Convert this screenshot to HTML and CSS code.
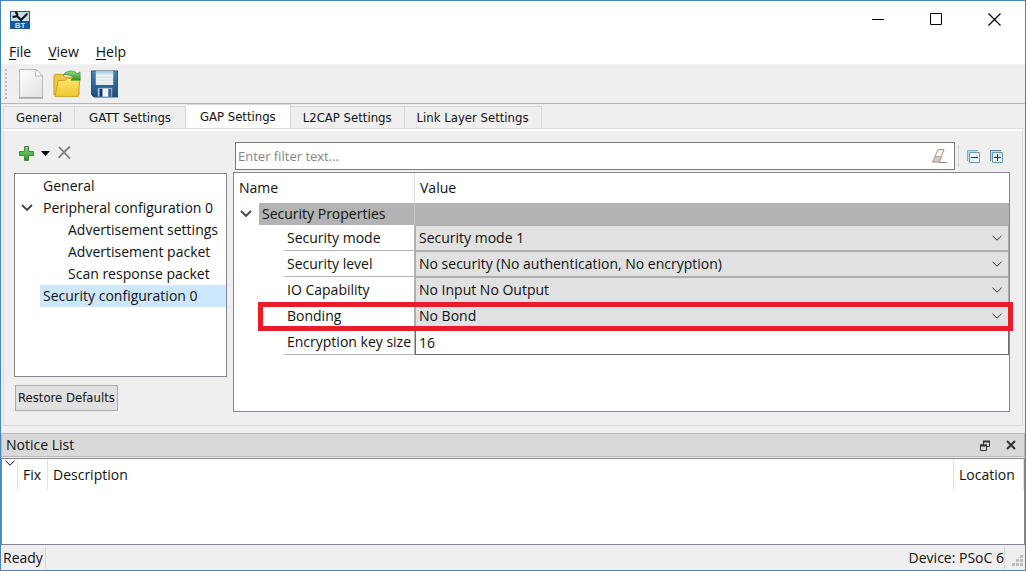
FILE: index.html
```html
<!DOCTYPE html>
<html lang="en">
<head>
<meta charset="utf-8">
<title>Bluetooth Configurator</title>
<link rel="stylesheet" href="styles.css">
</head>
<body>
<svg class="defs" aria-hidden="true">
  <symbol id="chev" viewBox="0 0 10 6"><path d="M.5.8 5 5.2 9.5.8" fill="none" stroke="currentColor"/></symbol>
  <linearGradient id="paper" x1="0" y1="0" x2="1" y2="1"><stop offset="0" stop-color="#fff"/><stop offset="1" stop-color="#e0e0e0"/></linearGradient>
  <linearGradient id="folder" x1="0" y1="0" x2="0" y2="1"><stop offset="0" stop-color="#ffe86c"/><stop offset="1" stop-color="#f0c62c"/></linearGradient>
  <linearGradient id="disk" x1="0" y1="0" x2="0" y2="1"><stop offset="0" stop-color="#4b86ad"/><stop offset="1" stop-color="#1d4878"/></linearGradient>
  <linearGradient id="green" x1="0" y1="0" x2="0" y2="1"><stop offset="0" stop-color="#8fd67c"/><stop offset="1" stop-color="#2f9429"/></linearGradient>
</svg>
<div class="window">
  <header class="titlebar">
    <svg class="logo" width="20" height="18" viewBox="0 0 20 18" role="img" aria-label="BT">
      <rect width="20" height="18" fill="#17599b"/><rect x="1" y="1" width="18" height="9" fill="#c7dbe8"/>
      <path d="M2.500 5.500c2 .8 3.500.5 4.500-1.500M5 1.500c2 0 3 1.500 2 3.500l4 4L17.500 2.500" fill="none" stroke="#111" stroke-width="2"/>
      <text x="10" y="17" class="logo-text">BT</text>
    </svg>
    <div class="caption">
      <button aria-label="Minimize"><svg width="13" height="13"><path d="M0 6.500h12" stroke="#000"/></svg></button>
      <button aria-label="Maximize"><svg width="13" height="13"><path d="M.5.5h11v11H.5z" fill="none" stroke="#000"/></svg></button>
      <button aria-label="Close"><svg width="13" height="13"><path d="M.5.5l12 12M12.500.5l-12 12" stroke="#000" stroke-width="1.200"/></svg></button>
    </div>
  </header>
  <nav class="menubar">
    <button><u>F</u>ile</button><button><u>V</u>iew</button><button><u>H</u>elp</button>
  </nav>
  <div class="toolbar">
    <span class="grip"></span>
    <button aria-label="New"><svg width="26" height="30" viewBox="0 0 26 30"><path d="M1.500.5h17l6 6.500v21.500h-23z" fill="url(#paper)" stroke="#b9b9b9"/><path d="M18.500.5c-1 3-1 5-1 7 3-1 5-1 7-.5z" fill="#fff" stroke="#b5b5b5"/><path d="M1 29h24" stroke="#909090"/></svg></button>
    <button aria-label="Open"><svg width="29" height="28" viewBox="0 0 30 28"><path d="M1 25V6l1-2h8l2 3h14l1 18z" fill="#eec93c" stroke="#c79b1c"/><path d="M2 27 5.500 10.500l8-.5 2-2H28l-2 19z" fill="url(#folder)" stroke="#c9a022"/><path d="M10.500 4.500C15-.5 22-.5 25 3.500l3-2V10h-9.500l3-3c-3-2.500-7-3-11-2.500z" fill="url(#green)" stroke="#37963b" stroke-width=".8"/></svg></button>
    <button aria-label="Save"><svg width="27" height="28" viewBox="0 0 28 28"><path d="M.5.5h27v27H3l-2.500-2.500z" fill="url(#disk)" stroke="#245078"/><path d="M5 1h18v14H5z" fill="#f0f5f6"/><path d="M5 1h18v3H5z" fill="#bed9e6"/><path d="M5 7h18M5 10h18M5 13h18" stroke="#d3dcdf"/><path d="M7 18h15v9H7z" fill="#a9bdd9"/><path d="M9 19h3v8H9z" fill="#102d70"/><path d="M12 19h6v8h-6z" fill="#f3f6fb"/><path d="M18 19h3v8h-3z" fill="#3b619b"/></svg></button>
  </div>
  <div class="tabs" role="tablist">
    <button role="tab">General</button><button role="tab">GATT Settings</button><button role="tab" class="active" aria-selected="true">GAP Settings</button><button role="tab">L2CAP Settings</button><button role="tab">Link Layer Settings</button>
  </div>
  <main class="pane">
    <section class="side">
      <div class="side-tools">
        <button aria-label="Add"><svg width="15" height="15" viewBox="0 0 15 15"><path d="M5.500.5h4v5h5v4h-5v5h-4v-5h-5v-4h5z" fill="url(#green)" stroke="#418c3d"/></svg></button>
        <button aria-label="Add options"><svg width="9" height="5"><path d="M0 0h9L4.500 5z"/></svg></button>
        <button class="remove" aria-label="Remove"><svg width="13" height="13" viewBox="0 0 13 13"><path d="M1 1l11 11.500M12 .5C8 4 4 8 .5 12" fill="none" stroke="#7c7c7c" stroke-width="1.800"/></svg></button>
      </div>
      <ul class="tree" role="tree">
        <li class="node" role="treeitem">General</li>
        <li class="node" role="treeitem"><svg class="twist" width="12" height="8" viewBox="0 0 12 8"><path d="M1 1l5 5 5-5" fill="none" stroke="#444" stroke-width="1.800"/></svg>Peripheral configuration 0</li>
        <li class="node leaf" role="treeitem">Advertisement settings</li>
        <li class="node leaf" role="treeitem">Advertisement packet</li>
        <li class="node leaf" role="treeitem">Scan response packet</li>
        <li class="node selected" role="treeitem">Security configuration 0</li>
      </ul>
      <button class="restore">Restore Defaults</button>
    </section>
    <section class="props">
      <div class="filterbar">
        <div class="filter">
          <input type="text" placeholder="Enter filter text..." aria-label="Filter text">
          <button aria-label="Clear filter"><svg width="16" height="14" viewBox="0 0 16 14"><path d="M7 .5h6L8.500 13h-7z" fill="#f7f1e9" stroke="#a39a8f"/><path d="M4.500 7.500h6L8 13H1.500z" fill="#d6cabb" stroke="#b5aa9d"/><path d="M8 13.500h8" stroke="#918779"/></svg></button>
        </div>
        <span class="sep"></span>
        <button aria-label="Collapse all"><svg width="13" height="13"><path d="M0 0h11v11H0z" fill="#c3dcec"/><path d="M.5 11V.5H11" fill="none" stroke="#7eabc9"/><path d="M2.500 2.500h10v10h-10z" fill="#e9f5fb" stroke="#6c98b8"/><path d="M4 7.500h7" stroke="#123f66"/></svg></button>
        <button aria-label="Expand all"><svg width="13" height="13"><path d="M0 0h11v11H0z" fill="#c3dcec"/><path d="M.5 11V.5H11" fill="none" stroke="#5d86a5"/><path d="M2.500 2.500h10v10h-10z" fill="#e9f5fb" stroke="#6c98b8"/><path d="M4 7.500h7M7.500 4v7" stroke="#123f66"/></svg></button>
      </div>
      <div class="grid-box">
        <table class="grid">
          <thead><tr><th class="name">Name</th><th>Value</th></tr></thead>
          <tbody>
            <tr class="group"><td><div class="group-head"><svg class="twist" width="12" height="8" viewBox="0 0 12 8"><path d="M1 1l5 5 5-5" fill="none" stroke="#444" stroke-width="1.800"/></svg><span>Security Properties</span></div></td><td class="group-fill"></td></tr>
            <tr><td><label for="mode">Security mode</label></td><td><div class="combo"><select id="mode"><option>Security mode 1</option></select><svg width="10" height="6"><use href="#chev"/></svg></div></td></tr>
            <tr><td><label for="level">Security level</label></td><td><div class="combo"><select id="level"><option>No security (No authentication, No encryption)</option></select><svg width="10" height="6"><use href="#chev"/></svg></div></td></tr>
            <tr><td><label for="io">IO Capability</label></td><td><div class="combo"><select id="io"><option>No Input No Output</option></select><svg width="10" height="6"><use href="#chev"/></svg></div></td></tr>
            <tr class="marked"><td><label for="bond">Bonding</label></td><td><div class="combo"><select id="bond"><option>No Bond</option></select><svg width="10" height="6"><use href="#chev"/></svg></div><span class="marker"></span></td></tr>
            <tr><td><label for="key">Encryption key size</label></td><td><input class="key" id="key" type="text" value="16"></td></tr>
          </tbody>
        </table>
      </div>
    </section>
  </main>
  <section class="notice">
    <div class="notice-head"><span>Notice List</span>
      <button aria-label="Float"><svg width="10" height="11"><path d="M3.500 5V1.500h6v5H7" fill="none" stroke="#333"/><path d="M3 1.500h7" stroke="#333" stroke-width="2"/><path d="M.5 5h6v5.500h-6z" fill="#d9d9d9" stroke="#333"/><path d="M0 5.500h7" stroke="#333" stroke-width="2"/></svg></button>
      <button aria-label="Close notice list"><svg width="10" height="10"><path d="M1 1l8 8M9 1L1 9" stroke="#333" stroke-width="2"/></svg></button>
    </div>
    <div class="notice-body">
      <table class="notice-table"><thead><tr><th class="c-sort"><svg width="10" height="6"><use href="#chev"/></svg></th><th class="c-fix">Fix</th><th>Description</th><th class="c-loc">Location</th></tr></thead></table>
    </div>
  </section>
  <footer class="status">
    <span class="cell">Ready</span><span class="cell device">Device: PSoC 6</span>
    <svg width="11" height="11" fill="#bdbdbd"><path d="M8 0h3v3H8zM4 4h3v3H4zM8 4h3v3H8zM0 8h3v3H0zM4 8h3v3H4zM8 8h3v3H8z"/></svg>
  </footer>
</div>
</body>
</html>
```
FILE: styles.css
```css
* { box-sizing: border-box; }
body { margin: 0; font: 14px/22px "Open Sans", "Noto Sans", sans-serif; color: #111; }
button, input, select { font: inherit; color: inherit; }
button { border: 0; padding: 0; background: none; display: flex; align-items: center; justify-content: center; }
svg { display: block; flex: none; }
.defs { position: absolute; width: 0; height: 0; }
.window { min-height: 100vh; display: flex; flex-direction: column; border: 1px solid #4a86bd; background: #efefef; }

.titlebar { height: 38px; background: #fff; display: flex; justify-content: space-between; align-items: center; padding-left: 9px; }
.logo-text { font: bold 8px "Liberation Sans", sans-serif; fill: #cfe6f5; text-anchor: middle; }
.caption { display: flex; padding: 0 2px 2px 0; }
.caption button { width: 58px; height: 36px; }
.menubar { height: 26px; background: #fff; display: flex; gap: 17px; padding: 0 8px; border-bottom: 1px solid #f2f2f2; }
.menubar u { text-underline-offset: 2px; }
.toolbar { height: 39px; display: flex; align-items: center; gap: 9px; padding-left: 4px; border-bottom: 1px solid #b4b4b4; }
.grip { width: 2px; height: 30px; margin-right: 2px; background: repeating-linear-gradient(#bcbcbc 0 2px, transparent 2px 4px); }

.tabs { height: 25px; display: flex; align-items: flex-end; padding: 0 2px; border-bottom: 1px solid #dcdcdc; font: 13px/16px "DejaVu Sans Condensed", "DejaVu Sans", sans-serif; }
.tabs button { height: 22px; padding: 0 14px; border: 1px solid #d9d9d9; border-width: 1px 1px 0 0; }
.tabs button:first-child { border-left-width: 1px; padding: 0 12px; }
.tabs .active { height: 24px; background: #fff; }
.tabs .active ~ button { padding: 0 12px; }
.pane { flex: 1; display: flex; gap: 6px; margin: 0 2px; padding: 11px 12px 13px 10px; border: 1px solid #dcdcdc; border-top: 2px solid #fff; }

.side { width: 213px; display: flex; flex-direction: column; flex: none; padding-bottom: 1px; }
.side-tools { height: 31px; display: flex; align-items: center; gap: 7px; padding: 0 0 8px 5px; }
.remove { padding-bottom: 2px; margin-left: 1px; }
.tree { flex: 1; margin: 0 0 8px; padding: 1px 0; list-style: none; background: #fff; border: 1px solid #828790; }
.node { display: flex; align-items: center; height: 22px; padding-left: 3px; margin-left: 25px; white-space: nowrap; }
.leaf { padding-left: 28px; }
.selected { background: #cce8ff; }
.node .twist { margin: 0 10px 0 -22px; }
.restore { align-self: flex-start; height: 26px; margin-left: 1px; padding: 0 2px; background: #e1e1e1; border: 1px solid #adadad; font: 13px/16px "DejaVu Sans Condensed", "DejaVu Sans", sans-serif; }

.props { flex: 1; min-width: 0; display: flex; flex-direction: column; gap: 2px; }
.filterbar { display: flex; align-items: center; padding: 0 7px 0 2px; }
.filter { flex: 1; height: 28px; display: flex; background: #fff; border: 1px solid #7a7a7a; padding-right: 7px; }
.filter input { flex: 1; border: 0; outline: 0; padding: 0 2px; background: none; font-size: 13px; }
.filter input::placeholder { color: #858585; }
.sep { width: 1px; height: 22px; margin: 0 8px 0 3px; background: #d0d0d0; }
.filterbar > button + button { margin-left: 10px; }
.grid-box { flex: 1; background: #fff; border: 1px solid #828790; }
.grid { width: 100%; table-layout: fixed; border-collapse: separate; border-spacing: 0; }
.grid th, .grid td { padding: 0; text-align: left; font-weight: normal; }
.grid th { height: 30px; padding-left: 5px; }
.grid .name { width: 181px; border-right: 1px solid #e2e2e2; }
.group-head { display: flex; align-items: center; height: 22px; padding-left: 6px; gap: 7px; }
.group-head span { flex: 1; padding-left: 3px; background: #b3b3b3; border-right: 1px solid #c6c6c6; }
.group .group-fill { background: #b3b3b3; }
.grid label { display: block; height: 26px; margin-left: 50px; padding-left: 3px; line-height: 26px; border-bottom: 1px solid #b5b5b5; border-right: 1px solid #b5b5b5; white-space: nowrap; }
.combo { display: grid; align-items: center; }
.combo select, .combo svg { grid-area: 1 / 1; }
.combo select { appearance: none; width: 100%; height: 26px; padding: 0 3px; border: 1px solid #adadad; border-radius: 0; background: #e1e1e1; }
.combo svg { justify-self: end; margin-right: 7px; color: #333; pointer-events: none; }
.key { display: block; width: 100%; height: 26px; padding: 0 3px; border: 1px solid #6d6d6d; background: #fff; }
.marked { position: relative; }
.marker { position: absolute; inset: -1px -4px -2px 24px; border: 5px solid #ec1c24; pointer-events: none; }

.notice { margin-top: 7px; }
.notice-head { height: 24px; display: flex; align-items: center; gap: 16px; padding: 0 8px 0 4px; background: #d9d9d9; border: 1px solid #b9b9b9; }
.notice-head span { flex: 1; }
.notice-body { height: 87px; margin-top: 1px; background: #fff; border: 1px solid #828790; }
.notice-table { width: 100%; border-collapse: separate; border-spacing: 0; table-layout: fixed; }
.notice-table th { height: 31px; padding: 0 0 0 5px; text-align: left; font-weight: normal; border-right: 1px solid #e2e2e2; }
.notice-table .c-sort { width: 16px; padding: 1px 0 0 3px; vertical-align: top; }
.notice-table .c-fix { width: 30px; }
.notice-table .c-loc { width: 70px; }
.status { height: 25px; display: flex; align-items: center; padding-right: 2px; }
.cell { padding: 0 2px; border-right: 1px solid #d6d6d6; }
.device { margin-left: auto; padding-right: 0; }
.status svg { margin: 6px 0 0 7px; }
```
